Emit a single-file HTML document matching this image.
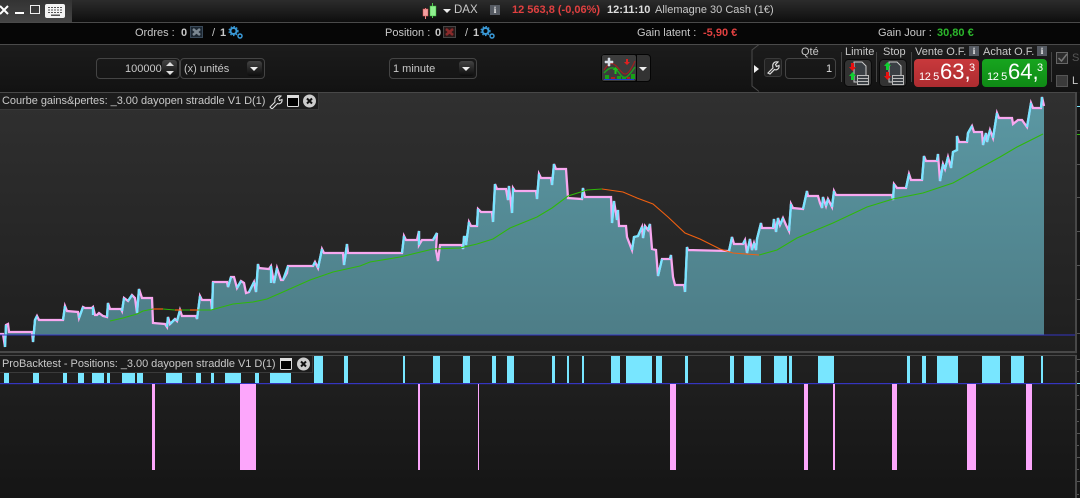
<!DOCTYPE html>
<html><head><meta charset="utf-8"><style>
html,body{margin:0;padding:0;background:#1a1a1a}
#r{position:relative;width:1080px;height:498px;overflow:hidden;font:11px/13px "Liberation Sans",sans-serif;color:#c8c8c8;background:#1a1a1a}
#r>*{position:absolute}
.t{white-space:nowrap}
.b{font-weight:bold}
.box{border:1px solid #444;border-radius:4px;box-sizing:border-box}
.btn{background:linear-gradient(#444,#0c0c0c);border-radius:3px}
.tri{width:0;height:0;border-left:4px solid transparent;border-right:4px solid transparent;border-top:4px solid #eee}
.i{background:#555a62;color:#eee;font:bold 9px/10px "Liberation Serif",serif;text-align:center}
</style></head><body><div id="r">
<div style="left:0;top:0;width:1080px;height:22px;background:linear-gradient(#2c2c2c,#0e0e0e)"></div>
<div style="left:0;top:22px;width:1080px;height:1px;background:#4a4a4a"></div>
<div style="left:0;top:23px;width:1080px;height:21px;background:#060606"></div>
<div style="left:0;top:44px;width:1080px;height:1px;background:#4a4a4a"></div>
<div style="left:0;top:45px;width:1080px;height:47px;background:linear-gradient(#1c1c1c,#121212)"></div>
<div style="left:0;top:92px;width:1077px;height:261px;background:linear-gradient(#303030,#1f1f1f);border-top:1px solid #484848;box-sizing:border-box;border-right:2px solid #484848;border-bottom:2px solid #484848"></div>
<div style="left:0;top:353px;width:1080px;height:145px;background:linear-gradient(#212121,#151515)"></div>
<div style="left:1077px;top:93px;width:3px;height:405px;background:#151515"></div>
<div style="left:0;top:355px;width:1077px;height:143px;border-top:1px solid #484848;border-right:2px solid #484848;box-sizing:border-box"></div>

<!-- window controls -->
<div style="left:0;top:0;width:72px;height:22px;background:linear-gradient(#333,#444)"></div>
<svg style="left:0;top:0" width="72" height="22"><path d="M0 6L8 14M8 6L0 14" stroke="#fff" stroke-width="2"/><rect x="15" y="12" width="9" height="2" fill="#fff"/><rect x="30.500" y="5.500" width="9" height="8" fill="none" stroke="#eee"/><rect x="45" y="4" width="20" height="14" rx="2" fill="#f4f4f4"/><path d="M48 7.500h14M48 10h14M48 12.500h14" stroke="#555" stroke-dasharray="2 1"/><rect x="51" y="14.500" width="9" height="1.500" fill="#555"/></svg>

<!-- top row -->
<svg style="left:422px;top:1px" width="20" height="20"><path d="M3.500 7V18" stroke="#f08080"/><rect x="1" y="8" width="5" height="7" fill="#f4a0a0" stroke="#d85050" stroke-width=".5"/><path d="M10.500 2V17" stroke="#50d050"/><rect x="8" y="5" width="6" height="10" fill="#90f090" stroke="#30b030" stroke-width=".5"/></svg>
<div class="tri" style="left:443px;top:9px"></div>
<div class="t" style="left:454px;top:4px;font-size:11.500px">DAX</div>
<div class="i" style="left:490px;top:5px;width:10px;height:10px">i</div>
<div class="t b" style="left:512px;top:4px;color:#e04040">12 563,8 (-0,06%)</div>
<div class="t b" style="left:607px;top:4px;color:#ddd">12:11:10</div>
<div class="t" style="left:655px;top:4px">Allemagne 30 Cash (1€)</div>

<!-- row 2 -->
<div class="t" style="left:135px;top:27px">Ordres :</div>
<div class="t b" style="left:181px;top:27px">0</div>
<svg style="left:190px;top:26px" width="14" height="13"><rect x=".5" y=".5" width="12" height="11" fill="#1d2833" stroke="#3a4a5a"/><path d="M3 3L10 9M10 3L3 9" stroke="#7b8791" stroke-width="2.500"/></svg>
<div class="t" style="left:212px;top:27px">/</div>
<div class="t b" style="left:220px;top:27px">1</div>
<svg style="left:228px;top:26px" width="16" height="14"><circle cx="5.500" cy="5" r="3" fill="none" stroke="#3a9ad8" stroke-width="2"/><circle cx="5.500" cy="5" r="4.500" fill="none" stroke="#3a9ad8" stroke-width="1.200" stroke-dasharray="1.500 1.500"/><circle cx="12" cy="10" r="2" fill="none" stroke="#3a9ad8" stroke-width="1.500"/></svg>
<div class="t" style="left:385px;top:27px">Position :</div>
<div class="t b" style="left:435px;top:27px">0</div>
<svg style="left:443px;top:26px" width="14" height="13"><rect x=".5" y=".5" width="12" height="11" fill="#2a1a1a" stroke="#444"/><path d="M3 3L10 9M10 3L3 9" stroke="#8a2a2a" stroke-width="2.500"/></svg>
<div class="t" style="left:465px;top:27px">/</div>
<div class="t b" style="left:473px;top:27px">1</div>
<svg style="left:480px;top:26px" width="16" height="14"><circle cx="5.500" cy="5" r="3" fill="none" stroke="#3a9ad8" stroke-width="2"/><circle cx="5.500" cy="5" r="4.500" fill="none" stroke="#3a9ad8" stroke-width="1.200" stroke-dasharray="1.500 1.500"/><circle cx="12" cy="10" r="2" fill="none" stroke="#3a9ad8" stroke-width="1.500"/></svg>
<div class="t" style="left:637px;top:27px">Gain latent :</div>
<div class="t b" style="left:703px;top:27px;color:#e04040">-5,90 €</div>
<div class="t" style="left:878px;top:27px">Gain Jour :</div>
<div class="t b" style="left:937px;top:27px;color:#2cb82c">30,80 €</div>

<!-- row 3 left -->
<div class="box" style="left:96px;top:58px;width:84px;height:21px"></div>
<div class="t" style="left:125px;top:63px">100000</div>
<div class="btn" style="left:162px;top:60px;width:15px;height:17px"></div>
<div class="tri" style="left:166px;top:62px;border-top:0;border-bottom:4px solid #ddd"></div>
<div class="tri" style="left:166px;top:71px;border-top:4px solid #ddd"></div>
<div class="box" style="left:180px;top:58px;width:85px;height:21px"></div>
<div class="t" style="left:184px;top:63px">(x) unités</div>
<div class="btn" style="left:247px;top:61px;width:15px;height:15px"></div>
<div class="tri" style="left:250px;top:67px"></div>
<div class="box" style="left:389px;top:58px;width:88px;height:21px"></div>
<div class="t" style="left:393px;top:63px">1 minute</div>
<div class="btn" style="left:459px;top:61px;width:15px;height:15px"></div>
<div class="tri" style="left:462px;top:67px"></div>

<!-- indicator button -->
<div style="left:601px;top:54px;width:50px;height:28px;background:#050505;border-radius:4px"></div>
<svg style="left:602px;top:55px" width="34" height="26"><rect width="34" height="26" rx="2" fill="#3c3c3c"/><path d="M2 15C8 5 12 8 17 14S25 24 33 6" fill="none" stroke="#a02020" stroke-width="1.200"/><path d="M2 18C9 10 13 12 18 19S26 22 33 12" fill="none" stroke="#1fa01f" stroke-width="1.500"/><path d="M6 3h2v3h3v2H8v3H6V8H3V6h3z" fill="#d8dfe8" stroke="#d8dfe8" stroke-width=".5"/><path d="M24 4h2v3h2l-3 3-3-3h2z" fill="#e02020"/><path d="M13.500 12l3 3h-2v4h-2v-4h-2z" fill="#20c020"/><rect x="3" y="20" width="4" height="4" fill="#18a018"/><rect x="9" y="22" width="4" height="2" fill="#b02020"/><rect x="15" y="21" width="4" height="3" fill="#18a018"/><rect x="20" y="22" width="4" height="2" fill="#18a018"/><rect x="25" y="22" width="3" height="2" fill="#b02020"/><rect x="29" y="19" width="4" height="5" fill="#18a018"/><rect x="2" y="24" width="30" height="1" fill="#2040d0"/></svg>
<div style="left:637px;top:55px;width:13px;height:26px;background:#333;border-radius:0 3px 3px 0"></div>
<div class="tri" style="left:639px;top:67px"></div>

<!-- right order panel -->
<svg style="left:750px;top:44px" width="12" height="48"><path d="M9 .500L2 6V42L9 47.500" fill="none" stroke="#4a4a4a"/></svg>
<div style="left:754px;top:65px;width:0;height:0;border-left:5px solid #eee;border-top:4px solid transparent;border-bottom:4px solid transparent"></div>
<div style="left:764px;top:58px;width:18px;height:19px;background:#222;border:1px solid #3a3a3a;border-radius:3px;box-sizing:border-box"></div>
<svg style="left:765px;top:59px" width="16" height="17"><path d="M3 14L8 9C7 5 9 2 13 3L10.500 5.500L11.500 7.500L14 6.500C14.500 10 11.500 11.500 9.500 10.500L5 15Z" fill="none" stroke="#ddd" stroke-width="1.200"/></svg>
<div class="t" style="left:801px;top:46px">Qté</div>
<div class="box" style="left:785px;top:58px;width:51px;height:21px"></div>
<div class="t" style="left:826px;top:63px;color:#ddd">1</div>
<div style="left:841px;top:52px;width:1px;height:30px;background:#444"></div>
<div style="left:876px;top:52px;width:1px;height:30px;background:#444"></div>
<div style="left:911px;top:52px;width:1px;height:30px;background:#444"></div>
<div style="left:1051px;top:52px;width:1px;height:30px;background:#444"></div>
<div class="t" style="left:845px;top:46px">Limite</div>
<div class="t" style="left:883px;top:46px">Stop</div>
<svg style="left:844px;top:59px" width="28" height="28"><rect x=".5" y=".5" width="27" height="27" rx="4" fill="#333" stroke="#0a0a0a"/><path d="M10 3H18L22 7V23H10Z" fill="#3a3f44" stroke="#ccc"/><rect x="13.500" y="16.500" width="11" height="9" fill="#3a3f44" stroke="#bbb"/><path d="M13.500 19.500h11M13.500 22.500h11" stroke="#bbb"/><path d="M7 4h3v4h2l-3.500 4L5 8h2z" fill="#e81010"/><path d="M8.500 13l3.500 4h-2v4H7v-4H5z" fill="#10d030"/></svg>
<svg style="left:879px;top:59px" width="28" height="28"><rect x=".5" y=".5" width="27" height="27" rx="4" fill="#333" stroke="#0a0a0a"/><path d="M10 3H18L22 7V23H10Z" fill="#3a3f44" stroke="#ccc"/><rect x="13.500" y="16.500" width="11" height="9" fill="#3a3f44" stroke="#bbb"/><path d="M13.500 19.500h11M13.500 22.500h11" stroke="#bbb"/><path d="M8.500 3l3.500 4h-2v4H7V7H5z" fill="#10d030"/><path d="M7 13h3v4h2l-3.500 4L5 17h2z" fill="#e81010"/></svg>
<div class="t" style="left:915px;top:46px">Vente O.F.</div>
<div class="i" style="left:969px;top:46px;width:10px;height:10px">i</div>
<div class="t" style="left:983px;top:46px">Achat O.F.</div>
<div class="i" style="left:1037px;top:46px;width:10px;height:10px">i</div>
<div style="left:914px;top:59px;width:65px;height:28px;background:linear-gradient(#c9393c,#ad2c30);border-radius:4px"></div>
<div style="left:982px;top:59px;width:65px;height:28px;background:linear-gradient(#17a51f,#0f8a15);border-radius:4px"></div>
<div class="t" style="left:919px;top:71px;color:#fff;font-size:11px;letter-spacing:-.4px">12 5</div>
<div class="t" style="left:940px;top:59px;color:#fff;font-size:22px;line-height:26px">63,</div>
<div class="t" style="left:969px;top:62px;color:#fff;font-size:11px">3</div>
<div class="t" style="left:987px;top:71px;color:#fff;font-size:11px;letter-spacing:-.4px">12 5</div>
<div class="t" style="left:1008px;top:59px;color:#fff;font-size:22px;line-height:26px">64,</div>
<div class="t" style="left:1037px;top:62px;color:#fff;font-size:11px">3</div>
<svg style="left:1056px;top:52px" width="13" height="13"><rect x=".5" y=".5" width="11" height="11" fill="#2c2c2c" stroke="#666"/><path d="M2.500 6L5.500 9L11 2" fill="none" stroke="#777" stroke-width="1.500"/></svg>
<div class="t" style="left:1072px;top:52px;color:#555">S</div>
<div style="left:1056px;top:75px;width:12px;height:12px;background:#3a3a3a;border:1px solid #555;box-sizing:border-box"></div>
<div class="t" style="left:1072px;top:75px">L</div>

<!-- chart -->
<svg style="left:0;top:0" width="1080" height="498">
<defs><linearGradient id="g" x1="0" y1="97" x2="0" y2="335" gradientUnits="userSpaceOnUse"><stop offset="0" stop-color="#5b98a3"/><stop offset="1" stop-color="#4d7d87"/></linearGradient></defs>
<polygon fill="url(#g)" points="0,335 0,334 3,334 5,347 6,325 8,324 9,332 32,332 33,342 35,320 37,316 39,320 63,320 65,306 67,311 78,312 79,318 83,307 85,308 92,308 93,307 95,315 97,315 99,313 103,316 107,317 108,303 110,309 121,309 122,311 124,298 128,301 132,295 135,298 137,313 139,289 142,298 152,298 153,323 165,324 167,327 168,317 170,324 175,319 177,321 180,310 182,316 196,316 197,319 200,296 202,300 211,300 212,310 213,282 227,282 228,287 231,277 234,277 237,288 241,281 244,283 246,293 249,292 254,282 256,292 258,264 259,268 269,269 271,266 274,283 277,268 281,280 283,280 287,273 288,266 313,266 315,262 318,268 322,249 324,253 343,253 344,265 347,244 348,253 402,253 404,236 406,240 417,240 419,231 419,245 422,240 433,240 437,233 436,250 438,261 440,245 462,245 463,249 464,237 466,237 466,245 469,222 471,226 477,226 478,209 481,212 492,212 493,222 495,184 497,189 506,189 508,200 509,186 512,213 513,188 515,191 536,191 537,199 539,174 541,178 551,178 552,185 554,164 556,169 566,169 568,198 582,199 583,188 585,197 611,197 612,223 614,201 617,220 618,210 619,226 626,226 627,237 632,250 634,237 638,236 642,227 643,238 645,226 648,230 650,224 652,249 656,250 658,276 662,259 670,259 671,255 673,277 675,285 684,285 685,292 687,247 688,250 729,251 732,237 734,244 743,244 745,240 747,253 750,239 752,250 754,243 756,250 757,239 761,223 762,228 773,228 774,219 776,232 778,218 780,225 783,218 786,225 789,231 791,204 793,208 803,209 807,191 808,196 818,196 820,203 822,208 823,197 826,206 828,199 832,207 834,191 836,195 892,195 893,200 894,184 897,188 906,188 909,174 911,180 922,180 924,156 926,161 937,161 938,154 940,181 943,164 945,169 948,157 951,168 953,152 957,150 957,136 959,142 967,142 968,133 972,126 974,132 982,132 983,145 986,133 987,142 990,130 993,138 997,113 999,118 1012,118 1013,124 1018,120 1022,120 1027,127 1031,103 1033,108 1041,108 1042,97 1044,106 1044,335"/>
<polyline fill="none" stroke="#f8a8f0" stroke-width="2.300" points="0,334 3,334 5,347 6,325 8,324 9,332 32,332 33,342 35,320 37,316 39,320 63,320 65,306 67,311 78,312 79,318 83,307 85,308 92,308 93,307 95,315 97,315 99,313 103,316 107,317 108,303 110,309 121,309 122,311 124,298 128,301 132,295 135,298 137,313 139,289 142,298 152,298 153,323 165,324 167,327 168,317 170,324 175,319 177,321 180,310 182,316 196,316 197,319 200,296 202,300 211,300 212,310 213,282 227,282 228,287 231,277 234,277 237,288 241,281 244,283 246,293 249,292 254,282 256,292 258,264 259,268 269,269 271,266 274,283 277,268 281,280 283,280 287,273 288,266 313,266 315,262 318,268 322,249 324,253 343,253 344,265 347,244 348,253 402,253 404,236 406,240 417,240 419,231 419,245 422,240 433,240 437,233 436,250 438,261 440,245 462,245 463,249 464,237 466,237 466,245 469,222 471,226 477,226 478,209 481,212 492,212 493,222 495,184 497,189 506,189 508,200 509,186 512,213 513,188 515,191 536,191 537,199 539,174 541,178 551,178 552,185 554,164 556,169 566,169 568,198 582,199 583,188 585,197 611,197 612,223 614,201 617,220 618,210 619,226 626,226 627,237 632,250 634,237 638,236 642,227 643,238 645,226 648,230 650,224 652,249 656,250 658,276 662,259 670,259 671,255 673,277 675,285 684,285 685,292 687,247 688,250 729,251 732,237 734,244 743,244 745,240 747,253 750,239 752,250 754,243 756,250 757,239 761,223 762,228 773,228 774,219 776,232 778,218 780,225 783,218 786,225 789,231 791,204 793,208 803,209 807,191 808,196 818,196 820,203 822,208 823,197 826,206 828,199 832,207 834,191 836,195 892,195 893,200 894,184 897,188 906,188 909,174 911,180 922,180 924,156 926,161 937,161 938,154 940,181 943,164 945,169 948,157 951,168 953,152 957,150 957,136 959,142 967,142 968,133 972,126 974,132 982,132 983,145 986,133 987,142 990,130 993,138 997,113 999,118 1012,118 1013,124 1018,120 1022,120 1027,127 1031,103 1033,108 1041,108 1042,97 1044,106"/>
<path fill="none" stroke="#78e6ff" stroke-width="2.300" d="M5 347L6 325M33 342L35 320L37 316M63 320L65 306M79 318L83 307M93 315L93 307M107 317L108 303M122 311L124 298M128 301L132 295M137 313L139 289M167 327L168 317M170 324L175 319M177 321L180 310M197 319L200 296M212 310L213 282M228 287L231 277M237 288L241 281M249 292L254 282M256 292L258 264M271 283L271 266M274 283L277 268M283 280L288 266M313 266L315 262M318 268L322 249M344 265L347 244M402 253L404 236M419 245L419 231M433 240L437 233M463 249L464 237L466 237M466 245L469 222M477 226L478 209M493 222L495 184M508 200L509 186M512 213L513 188M537 199L539 174M552 185L554 164M582 199L583 188M612 223L614 201M617 220L618 210M632 250L634 237L638 236L642 227M643 238L645 226M648 230L650 224M658 276L662 259M670 259L671 255M685 292L687 247M729 251L732 237M743 244L745 240M747 253L750 239M752 250L754 243M756 250L757 239L761 223M773 228L774 219M776 232L778 218M780 225L783 218M789 231L791 204M803 209L807 191M822 208L823 197M826 206L828 199M832 207L834 191M893 200L894 184M906 188L909 174M922 180L924 156M937 161L938 154M940 181L943 164M945 169L948 157M951 168L953 152L957 150L957 136M967 142L968 133L972 126M983 145L986 133M987 142L990 130M993 138L997 113M1027 127L1031 103M1041 108L1042 97"/>
<polyline fill="none" stroke="#2fb80a" stroke-width="1.100" points="110,321 123,318 137,314 143,311 153,309 163,309 175,310 198,310 211,310 233,304 253,302 267,299 283,292 310,280 333,272 360,266 370,262 400,257 433,249 460,248 477,244 493,239 510,228 537,217 552,208 568,196 587,190 602,189"/>
<path fill="none" stroke="#f06010" stroke-width="1.300" d="M153 309L163 309M175 310L182 310M190 310L198 310"/>
<polyline fill="none" stroke="#f06010" stroke-width="1.100" points="602,189 623,192 637,198 653,204 668,217 685,233 700,239 720,249 733,253 759,255"/>
<polyline fill="none" stroke="#2fb80a" stroke-width="1.100" points="759,255 777,250 797,238 833,223 867,207 893,199 923,193 953,183 980,168 1000,157 1017,147 1043,134"/>
<rect x="0" y="334.500" width="1075" height="1" fill="#3535c0"/>
<rect x="0" y="383" width="1076" height="1.200" fill="#3535c0"/>
<path fill="#78e6ff" d="M314 356h9v27h-9zM344 356h4v27h-4zM403 356h2v27h-2zM433 356h7v27h-7zM463 356h7v27h-7zM492 356h4v27h-4zM507 356h7v27h-7zM552 356h3v27h-3zM567 356h2v27h-2zM582 356h2v27h-2zM611 356h9v27h-9zM626 356h26v27h-26zM656 356h6v27h-6zM685 356h3v27h-3zM730 356h4v27h-4zM744 356h17v27h-17zM774 356h13v27h-13zM789 356h3v27h-3zM818 356h16v27h-16zM907 356h3v27h-3zM922 356h4v27h-4zM937 356h21v27h-21zM982 356h18v27h-18zM1011 356h13v27h-13zM1041 356h2v27h-2zM4 373h5v10h-5zM33 373h6v10h-6zM63 373h4v10h-4zM78 373h6v10h-6zM92 373h12v10h-12zM107 373h3v10h-3zM122 373h13v10h-13zM137 373h6v10h-6zM166 373h16v10h-16zM196 373h5v10h-5zM211 373h3v10h-3zM225 373h16v10h-16zM255 373h4v10h-4zM270 373h21v10h-21z"/>
<path fill="#fca6fb" d="M152 384h3v86h-3zM240 384h16v86h-16zM418 384h2v86h-2zM478 384h1v86h-1zM670 384h6v86h-6zM804 384h4v86h-4zM833 384h2v86h-2zM892 384h5v86h-5zM967 384h9v86h-9zM1026 384h6v86h-6z"/>
<path stroke="#555" d="M1077 130.500h3M1077 164.500h3M1077 197.500h3M1077 231.500h3M1077 265.500h3M1077 299.500h3M1077 333.500h3M1077 359.500h3M1077 371.500h2M1077 395.500h2M1077 409.500h3M1077 421.500h2M1077 433.500h3M1077 445.500h2M1077 457.500h3M1077 469.500h2M1077 481.500h3M1077 494.500h2"/>
<path stroke="#78e6ff" d="M1077 106.500h3M1077 383.500h3"/>
<path stroke="#2fb80a" d="M1077 134.500h3"/>
</svg>

<!-- chart title 1 -->
<div style="left:0;top:93px;width:319px;height:17px;background:#1c1c1c;border-right:1px solid #3a3a3a;border-bottom:1px solid #3a3a3a;box-sizing:border-box"></div>
<div class="t" style="left:2px;top:95px;letter-spacing:-.04px">Courbe gains&amp;pertes: _3.00 dayopen straddle V1 D(1)</div>
<svg style="left:269px;top:94px" width="48" height="15"><path d="M1 13L6 8C5 4 8 1 12 2L9.500 4.500L10.500 6.500L13 5.500C13.500 9 10.500 10.500 8.500 9.500L3 15Z" fill="none" stroke="#ddd" stroke-width="1.100"/><rect x="18.500" y="1.500" width="11" height="11" rx="1" fill="#000" stroke="#ddd"/><rect x="18" y="1" width="12" height="3" fill="#ddd"/><circle cx="40.500" cy="7" r="6.500" fill="#ccc"/><path d="M38 4.500L43 9.500M43 4.500L38 9.500" stroke="#111" stroke-width="2"/></svg>

<!-- chart title 2 -->
<div style="left:0;top:356px;width:313px;height:17px;background:#1c1c1c;border-right:1px solid #3a3a3a;border-bottom:1px solid #3a3a3a;box-sizing:border-box"></div>
<div class="t" style="left:2px;top:358px;letter-spacing:-.04px">ProBacktest - Positions: _3.00 dayopen straddle V1 D(1)</div>
<svg style="left:280px;top:357px" width="32" height="15"><rect x=".5" y="1.500" width="11" height="11" rx="1" fill="#000" stroke="#ddd"/><rect x="0" y="1" width="12" height="3" fill="#ddd"/><circle cx="23.500" cy="7" r="6.500" fill="#ccc"/><path d="M21 4.500L26 9.500M26 4.500L21 9.500" stroke="#111" stroke-width="2"/></svg>
</div></body></html>
